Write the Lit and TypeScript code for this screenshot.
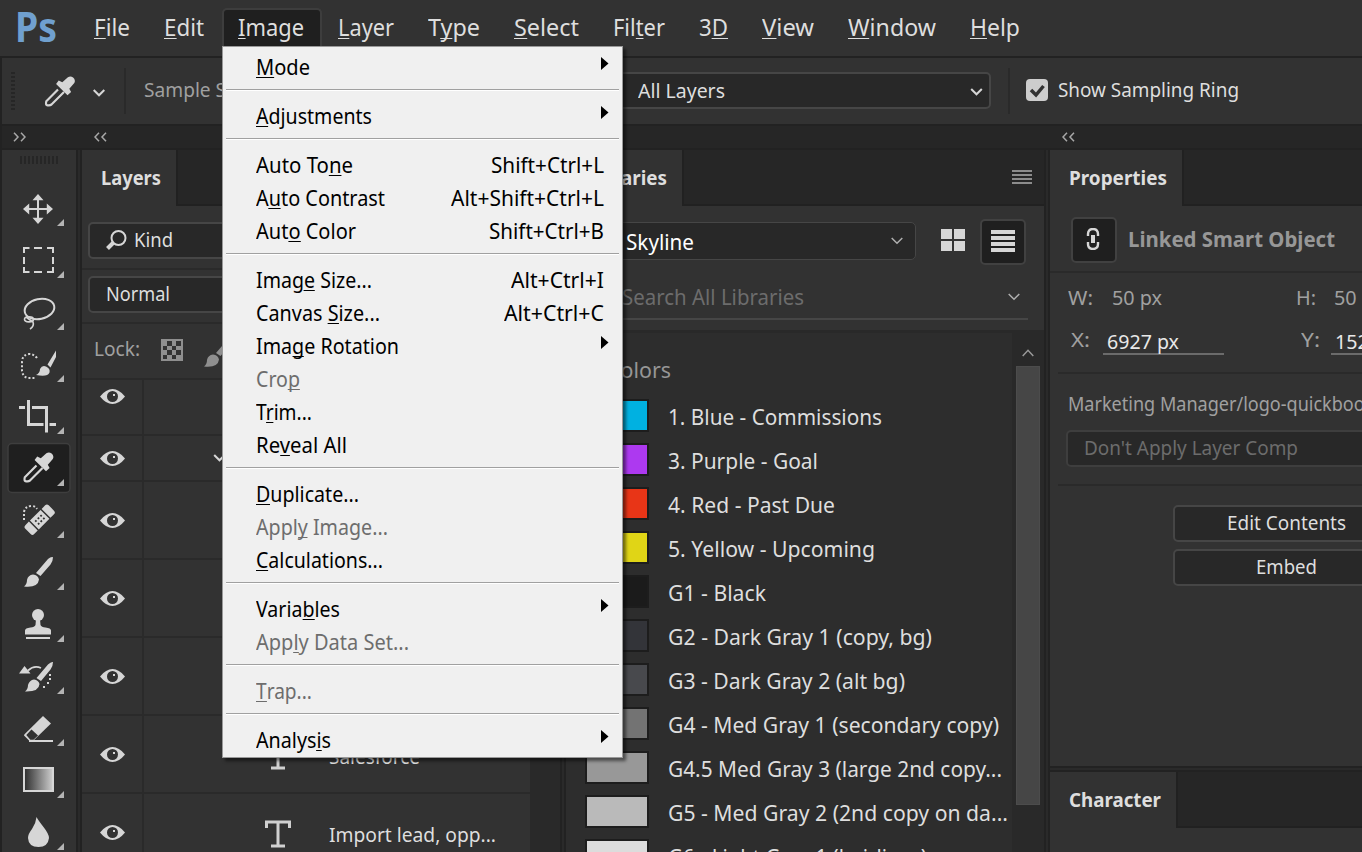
import { LitElement, html, svg, css, nothing } from "lit";
import { customElement, property } from "lit/decorators.js";

/* Single line of text condensed or widened horizontally to a given width. */
@customElement("ui-label")
class UiLabel extends LitElement {
  @property({ type: Number }) w = 0;
  @property() text = "";
  static styles = css`
    :host { display: inline-block; white-space: pre; flex: none; line-height: 30px; height: 30px; }
    .t { display: inline-block; transform-origin: 0 50%; }
    .u { position: relative; }
    .u::after { content: ""; position: absolute; left: 0; right: 0; bottom: var(--u, 3px); height: 1px; background: currentColor; }
  `;
  render() {
    const parts = this.text.split("&");
    if (parts.length === 1) return html`<span class="t">${this.text}</span>`;
    return html`<span class="t">${parts[0]}<span class="u">${parts[1][0]}</span>${parts[1].slice(1)}</span>`;
  }
  updated() {
    const el = this.renderRoot.querySelector(".t") as HTMLElement;
    const natural = el.getBoundingClientRect().width;
    if (!this.w || !natural) return;
    el.style.transform = `scaleX(${this.w / natural})`;
    this.style.width = `${this.w}px`;
  }
}

const MENUS: [string, number][] = [
  ["&File", 36], ["&Edit", 40], ["&Image", 66], ["&Layer", 56], ["T&ype", 52], ["&Select", 65],
  ["Fil&ter", 52], ["3&D", 29], ["&View", 52], ["&Window", 88], ["&Help", 50],
];

type Item = { t: string; w: number; key?: string; kw?: number; sub?: boolean; off?: boolean } | null;
const ITEMS: Item[] = [
  { t: "&Mode", w: 54, sub: true }, null,
  { t: "&Adjustments", w: 116, sub: true }, null,
  { t: "Auto To&ne", w: 97, key: "Shift+Ctrl+L", kw: 113 },
  { t: "A&uto Contrast", w: 129, key: "Alt+Shift+Ctrl+L", kw: 153 },
  { t: "Aut&o Color", w: 100, key: "Shift+Ctrl+B", kw: 115 }, null,
  { t: "Imag&e Size...", w: 116, key: "Alt+Ctrl+I", kw: 93 },
  { t: "Canvas &Size...", w: 124, key: "Alt+Ctrl+C", kw: 100 },
  { t: "Ima&ge Rotation", w: 143, sub: true },
  { t: "Cro&p", w: 44, off: true },
  { t: "T&rim...", w: 56 },
  { t: "Re&veal All", w: 91 }, null,
  { t: "&Duplicate...", w: 103 },
  { t: "Appl&y Image...", w: 132, off: true },
  { t: "&Calculations...", w: 127 }, null,
  { t: "Varia&bles", w: 84, sub: true },
  { t: "App&ly Data Set...", w: 153, off: true }, null,
  { t: "&Trap...", w: 56, off: true }, null,
  { t: "Analys&is", w: 75, sub: true },
];

const SWATCHES: [string, string, number][] = [
  ["#00b1e1", "1. Blue - Commissions", 214],
  ["#ad39f0", "3. Purple - Goal", 150],
  ["#e83517", "4. Red - Past Due", 167],
  ["#e0d516", "5. Yellow - Upcoming", 207],
  ["#1b1b1b", "G1 - Black", 98],
  ["#333439", "G2 - Dark Gray 1 (copy, bg)", 264],
  ["#48494d", "G3 - Dark Gray 2 (alt bg)", 237],
  ["#737373", "G4 - Med Gray 1 (secondary copy)", 331],
  ["#989898", "G4.5 Med Gray 3 (large 2nd copy...", 334],
  ["#bababa", "G5 - Med Gray 2 (2nd copy on da...", 340],
  ["#dcdcdc", "G6 - Light Gray 1 (hairlines)", 259],
];

const dropper = svg`
  <path d="M36.5 465.5L24.8 477.2Q23.6 481.8 26.6 481.3Q28.5 481.6 30 480.5L42.5 468" fill="none" stroke="#d6d6d6" stroke-width="2.2"/>
  <path d="M37.2 456.6L40.8 458.2L46.4 453.2Q49 451.6 51.6 453.4Q54.4 456 52.8 459L47.8 464.8L49.6 468L46 471.2L34.6 460Z" fill="#d6d6d6"/>`;

const TOOLS = [
  svg`<path d="M38 199v20M28 209h20" stroke="#d6d6d6" stroke-width="2"/><path d="M38 194l5.5 6.2h-11zM38 224l5.5-6.2h-11zM23 209l6.2-5.5v11zM53 209l-6.2-5.5v11z" fill="#d6d6d6"/>`,
  svg`<path d="M24 253v-5h5.500M34 248h8M47 248h6v5M53 257v7M53 267v5h-6M42 272h-8M29.500 272h-5.500v-5M24 264v-7" fill="none" stroke="#d6d6d6" stroke-width="2"/>`,
  svg`<ellipse cx="39.500" cy="309" rx="15" ry="10" transform="rotate(-12 39.500 309)" fill="none" stroke="#d6d6d6" stroke-width="2"/><ellipse cx="29" cy="319.300" rx="4.500" ry="2.600" fill="none" stroke="#d6d6d6" stroke-width="1.600"/><path d="M26 317q4 3 7 5q1.500 4-3 7" fill="none" stroke="#d6d6d6" stroke-width="1.600"/>`,
  svg`<path d="M37 358q-3-4-8-4q-7 1-7 8v9q1 6 6 7h8" fill="none" stroke="#d6d6d6" stroke-width="2" stroke-dasharray="2 2"/><path d="M36 375q4-2 4-6q2-4 6-2.500q4.500 2 3.500 6q-2 5-13.500 2.500M47.500 364.500L56 350.500V357L50.500 367.500z" fill="#d6d6d6"/>`,
  svg`<path d="M19 407.500h6M32 407.500h14.500v17M28.500 400v24.500h15M49.500 424.500h6.500M46.500 424v8.500" fill="none" stroke="#d6d6d6" stroke-width="3"/>`,
  svg`<rect x="8" y="443.500" width="62" height="49" rx="4" fill="#1f1f1f" stroke="#3e3e3e" stroke-width="1.500"/>${dropper}`,
  svg`<path d="M24 520v-8q1-6 8-6q3 0 5 3" fill="none" stroke="#d6d6d6" stroke-width="2" stroke-dasharray="2 2"/><g transform="rotate(-45 39.500 519.500)"><path d="M25.500 513.500h5v12.500h-5q-2.500 0-2.500-2.500v-7.500q0-2.500 2.500-2.500M53.500 513.500h-5v12.500h5q2.500 0 2.500-2.500v-7.500q0-2.500-2.500-2.500M32 513.500h15v12.500h-15z" fill="#d6d6d6"/><path d="M35 517h1.800v1.800h-1.800zM38.700 517h1.800v1.800h-1.800zM42.400 517h1.800v1.800h-1.800zM35 521h1.800v1.800h-1.800zM38.700 521h1.800v1.800h-1.800zM42.400 521h1.800v1.800h-1.800z" fill="#323232"/></g>`,
  svg`<path d="M24 586.500Q27 584 27 580Q28 575 33 574.500Q38 575 39 579.500Q38 588 24 586.500M36 573L48 559Q51 556.500 53 557.200Q53 561 50.500 564.500L40.500 576z" fill="#d6d6d6"/>`,
  svg`<circle cx="38" cy="615" r="6" fill="#d6d6d6"/><path d="M36 619h4l.5 6q1 2 5 2.500q5.500.5 5.500 3v4H25v-4q0-2.500 5.500-3q4-.5 5-2.500zM26 637h24v2H26z" fill="#d6d6d6"/>`,
  svg`<path d="M25 691.500Q28 689 28 685Q29.500 680 34 679.500Q38.500 680 39.500 684Q39 692 25 691.500M36.500 678L48 664.500Q51 661.500 53 662Q53 666 50.500 669.500L41 681zM19 673.500L24.500 666L30.500 673.500z" fill="#d6d6d6"/><path d="M28 670.500Q34 665 41 668" fill="none" stroke="#d6d6d6" stroke-width="1.800"/><path d="M49 674h2v2h-2zM49 678h2v2h-2zM47 682h2v2h-2zM43 686h2v2h-2z" fill="#d6d6d6"/>`,
  svg`<path d="M24.300 734.500L43 716L51 723.500L33 741H29.500L24 735.500z" fill="#d6d6d6"/><path d="M26.300 735L31.500 729.500L38 735.500L33.500 739.800H30.300z" fill="#323232"/><path d="M29 741h24" stroke="#d6d6d6" stroke-width="2"/>`,
  svg`<defs><linearGradient id="g"><stop offset="0" stop-color="#2c2c2c"/><stop offset="1" stop-color="#cfcfcf"/></linearGradient></defs><rect x="24" y="768" width="29" height="23" fill="url(#g)" stroke="#d6d6d6" stroke-width="2"/>`,
  svg`<path d="M36.500 817Q38 820 43.500 827Q49 834 49 838Q48 847 38.500 847Q28.500 847 28 838Q28 834 32 829Q36 823 36.500 817" fill="#d6d6d6"/>`,
];

const eye = html`<svg class="eye" viewBox="0 0 25 15"><path d="M0 7.500Q6 0 12.500 0T25 7.500Q19 15 12.500 15T0 7.500" fill="#d6d6d6"/><circle cx="12.500" cy="7.500" r="5.500" fill="#323232"/><rect x="13" y="5" width="2" height="2" fill="#d6d6d6"/></svg>`;
const chev = (w: number, c = "#d6d6d6", s = 2) => html`<svg width=${w} height="8" viewBox="0 0 12 8" class="ch"><path d="M.7 1L6 6.300L11.300 1" fill="none" stroke=${c} stroke-width=${s}/></svg>`;
const dbl = (flip: boolean) => html`<svg class="dbl" viewBox="0 0 13 10"><path d=${flip ? "M5 .8L1 5L5 9.200M12 .8L8 5L12 9.200" : "M1 .8L5 5L1 9.200M8 .8L12 5L8 9.200"} fill="none" stroke="#a8a8a8" stroke-width="1.500"/></svg>`;
const ROWS = [54, 44, 76, 76, 76, 76, 76];
const LAYERS: Record<number, [string, number]> = { 5: ["Salesforce", 91], 6: ["Import lead, opp...", 167] };

@customElement("app-root")
class AppRoot extends LitElement {
  static styles = css`
    :host { display: block; position: relative; width: 1362px; height: 852px; overflow: hidden; background: #222; color: #dedede; font: 20.500px/30px "Noto Sans", "Open Sans", sans-serif; }
    * { box-sizing: border-box; }
    svg { display: block; flex: none; }
    .row { display: flex; align-items: center; }
    .bar { height: 56px; background: #323232; padding-left: 15px; font-size: 23px; }
    .logo { font-size: 41px; font-weight: 700; color: #70a0cf; width: 79px; margin-top: -5px; }
    .menus { display: flex; gap: 34px; align-self: stretch; --u: 4px; }
    .m { height: 38px; margin: 8px 0 0; padding-top: 4px; }
    .m.on { margin: 8px -18px 0 -16px; padding: 2px 16px 0 14px; border: 2px solid #3d3d3d; border-bottom: 0; border-radius: 5px 5px 0 0; background: #1f1f1f; }
    .opts { height: 66px; margin: 2px 0 2px 2px; background: #323232; }
    .opts .ch { margin-top: 4px; }
    .vgrip { width: 4px; height: 38px; margin: 0 29px 0 9px; background: repeating-linear-gradient(#262626 0 2px, transparent 2px 4px); }
    .sep { width: 2px; height: 46px; background: #2a2a2a; }
    .dim { color: #a0a0a0; }
    .box { display: flex; align-items: center; border: 2px solid #464646; border-radius: 5px; background: #282828; height: 37px; }
    .all { width: 400px; margin: 0 0 1px auto; padding: 0 6px 1px 0; justify-content: space-between; }
    .head { height: 22px; margin-left: 2px; background: #262626; }
    .dbl { width: 13px; height: 10px; }
    .dock { display: grid; grid-template-columns: 74px 478px 478px 312px; gap: 6px; height: 702px; margin: 2px 0 0 2px; background: linear-gradient(90deg, transparent 76px, #2a2a2a 76px 78px, transparent 78px 560px, #2a2a2a 560px 562px, transparent 562px 1044px, #2a2a2a 1044px 1046px, transparent 1046px); }
    .tools { background: #323232; padding-top: 6px; }
    .hgrip { width: 38px; height: 8px; margin: 0 0 18px 18px; background: repeating-linear-gradient(90deg, #262626 0 2px, transparent 2px 4px); }
    .panel { background: #323232; min-width: 0; overflow: hidden; display: flex; flex-direction: column; }
    .tabs { display: flex; height: 56px; flex: none; }
    .tab { padding: 13px 15px 0 19px; font-weight: 700; font-size: 20px; }
    .fill { flex: 1; background: #262626; border-left: 2px solid #212121; border-bottom: 2px solid #212121; display: flex; justify-content: flex-end; padding: 20px 12px 0 0; }
    .ham { width: 20px; height: 14px; background: repeating-linear-gradient(#8c8c8c 0 2px, transparent 2px 4px); }
    .hr { height: 2px; background: #2a2a2a; flex: none; }
    .box.lay { margin: 0 10px 0 6px; padding-left: 16px; flex: none; }
    .lrow { display: grid; grid-template-columns: 60px 386px; column-gap: 2px; border-bottom: 2px solid #2a2a2a; background: linear-gradient(90deg, transparent 60px, #2a2a2a 60px 62px, transparent 62px); width: 448px; box-sizing: content-box; overflow: hidden; align-items: center; }
    .rows { flex: 1; background: #292929; overflow: hidden; }
    .lrow { background-color: #323232; }
    .eye { width: 25px; height: 15px; margin-left: 18px; }
    .lock { height: 54px; padding-left: 12px; }
    .list { flex: 1; display: flex; border-top: 3px solid #292929; background: #2d2d2d; overflow: hidden; }
    .items { flex: 1; padding: 21px 0 0 19px; overflow: hidden; font-size: 22px; min-width: 0; }
    .sw { display: flex; align-items: center; height: 44px; }
    .chip { width: 64px; height: 33px; border: 2px solid #1d1d1d; margin-right: 19px; margin-top: -1px; flex: none; }
    .sb { width: 32px; background: #292929; padding: 16px 4px 0; }
    .thumb { height: 439px; margin-top: 9px; background: #464646; border: 1px solid #4c4c4c; }
    .btn { width: 46px; height: 46px; border: 2px solid #414141; border-radius: 5px; background: #1f1f1f; display: flex; align-items: center; justify-content: center; flex: none; }
    .right { display: grid; grid-template-rows: 616px 2px 80px; gap: 2px; min-width: 0; }
    .gap { background: #2a2a2a; }
    .inp { border-bottom: 2px solid #6b6b6b; height: 29px; padding-left: 4px; width: 121px; color: #e8e8e8; flex: none; }
    .inp ui-label { margin-top: -1px; }
    .push { width: 228px; height: 37px; justify-content: center; margin-left: 123px; flex: none; padding: 0 2px 4px 0; }
    .menu { position: absolute; left: 222px; top: 46px; width: 401px; height: 712px; background: #f0f0f0; border: 1px solid #999; padding: 2px 3px 0 3px; color: #000; box-shadow: 3px 3px 3px rgba(0,0,0,.5); font-size: 21px; }
    .mi { display: flex; height: 33px; padding: 3px 15px 0 30px; justify-content: space-between; }
    .mi.off { color: #6d6d6d; }
    .ms { height: 16px; padding-top: 7px; }
    .ms div { height: 2px; background: #a0a0a0; border-bottom: 1px solid #fff; }
    .ar { margin: 5px -5px 0 0; }
  `;

  private tabs(t: string, w: number, ham = false) {
    return html`<div class="tabs"><div class="tab"><ui-label text=${t} w=${w}></ui-label></div><div class="fill">${ham ? html`<div class="ham"></div>` : nothing}</div></div>`;
  }

  render() {
    return html`
      <div class="bar row">
        <div class="logo"><ui-label text="Ps" w="42"></ui-label></div>
        <div class="menus">${MENUS.map(([t, w], i) => html`<div class="m ${i === 2 ? "on" : ""}"><ui-label text=${t} w=${w}></ui-label></div>`)}</div>
      </div>
      <div class="opts row">
        <div class="vgrip"></div>
        <svg width="32" height="32" viewBox="23 451 31 32">${dropper}</svg>
        <div style="width:17px"></div>${chev(12)}<div style="width:19px"></div>
        <div class="sep"></div>
        <ui-label class="dim" style="margin:0 0 4px 18px" text="Sample Size:" w="112"></ui-label>
        <div class="box all"><ui-label style="margin:0 0 1px 45px" text="All Layers" w="87"></ui-label>${chev(13)}</div>
        <div class="sep" style="margin:0 16px 0 17px"></div>
        <svg style="margin-bottom:3px" width="22" height="22" viewBox="0 0 22 22"><rect width="22" height="22" rx="4" fill="#cdcdcd"/><path d="M5 11l5 5L17.500 7" fill="none" stroke="#323232" stroke-width="3.500"/></svg>
        <ui-label style="margin:0 123px 4px 10px" text="Show Sampling Ring" w="181"></ui-label>
      </div>
      <div class="head row">
        <div style="width:11px"></div>${dbl(false)}<div style="width:68px"></div>${dbl(true)}<div style="width:955px"></div>${dbl(true)}
      </div>
      <div class="dock">
        <div class="tools">
          <div class="hgrip"></div>
          ${TOOLS.map((t, i) => html`<svg width="74" height="52" viewBox="2 ${182 + 52 * i} 74 52">${t}<path d="M64 ${219 + 52 * i}v7h-7z" fill="#b4b4b4"/></svg>`)}
        </div>
        <div class="panel">
          ${this.tabs("Layers", 60)}
          <div class="box lay" style="margin-top:16px"><svg width="21" height="21" viewBox="0 0 21 21"><circle cx="12.500" cy="8" r="7" fill="none" stroke="#d6d6d6" stroke-width="2"/><path d="M7.500 12.500L1.500 18.500" stroke="#d6d6d6" stroke-width="4"/></svg><ui-label style="margin:0 0 3px 7px" text="Kind" w="39"></ui-label></div>
          <div class="hr" style="margin-top:9px"></div>
          <div class="box lay" style="margin-top:6px"><ui-label style="margin-bottom:3px" text="Normal" w="64"></ui-label></div>
          <div class="hr" style="margin-top:9px"></div>
          <div class="lock row">
            <ui-label class="dim" text="Lock:" w="46" style="margin-bottom:7px"></ui-label>
            <svg style="margin:0 0 2px 21px" width="22" height="22" viewBox="0 0 22 22"><rect width="22" height="22" fill="#8f8f8f"/><path d="M6 2h5v5h-5zM15 2h5v5h-5zM2 7h4v4h-4zM11 7h4v4h-4zM6 11h5v5h-5zM15 11h5v5h-5zM2 16h4v4h-4zM11 16h4v4h-4z" fill="#323232"/></svg>
            <svg style="margin:2px 0 0 21px" width="30" height="30" viewBox="24 557 30 30"><path d="M24 586.500Q27 584 27 580Q28 575 33 574.500Q38 575 39 579.500Q38 588 24 586.500M36 573L48 559Q51 556.500 53 557.200Q53 561 50.500 564.500L40.500 576z" fill="#8f8f8f"/></svg>
          </div>
          <div class="hr"></div>
          <div class="rows">${ROWS.map((h, i) => html`<div class="lrow" style="height:${h}px"><div style="padding-top:${i === 0 ? 0 : 1}px;margin-top:${i === 0 ? -21 : 0}px">${eye}</div>
            ${LAYERS[i] ? html`<div class="row" style="padding:3px 0 0 121px"><svg width="26" height="28" viewBox="0 0 26 28"><path d="M1.500 8V2h23v6M13 2v24M6 26h14" fill="none" stroke="#d0d0d0" stroke-width="3"/></svg><ui-label style="margin:0 0 0 38px" text=${LAYERS[i][0]} w=${LAYERS[i][1]}></ui-label></div>`
            : i === 1 ? html`<div style="padding-left:69px">${chev(13)}</div>` : html`<div></div>`}</div>`)}</div>
        </div>
        <div class="panel">
          ${this.tabs("Libraries", 82, true)}
          <div class="row" style="height:60px;padding:12px 18px 0 20px;flex:none">
            <div class="box" style="width:330px;height:38px;border-width:1.500px;justify-content:space-between;padding:0 12px 0 39px;margin-bottom:2px"><ui-label text="Skyline" w="68" style="color:#fff;font-size:22px;margin-top:0"></ui-label>${chev(12, "#b0b0b0", 1.5)}</div>
            <svg style="margin:-4px 15px 0 25px" width="24" height="22" viewBox="0 0 24 22"><path d="M0 0h11v10H0zM13 0h11v10H13zM0 12h11v10H0zM13 12h11v10H13z" fill="#d6d6d6"/></svg>
            <div class="btn"><svg style="margin-bottom:3px" width="24" height="22" viewBox="0 0 24 22"><path d="M0 0h24v4H0zM0 6h24v4H0zM0 12h24v4H0zM0 18h24v4H0z" fill="#d6d6d6"/></svg></div>
          </div>
          <div style="padding:0 16px 0 20px;height:54px;flex:none"><div class="row" style="height:54px;border-bottom:2px solid #464646;justify-content:space-between;padding:10px 8px 0 36px"><ui-label text="Search All Libraries" w="182" style="color:#6c6c6c;font-size:22px;margin-bottom:2px"></ui-label>${chev(12, "#b0b0b0", 1.5)}</div></div>
          <div class="list" style="margin-top:10px">
            <div class="items">
              <ui-label style="margin:0 0 10px 22px;color:#969696;vertical-align:top" text="Colors" w="64"></ui-label>
              ${SWATCHES.map(([c, t, w]) => html`<div class="sw"><div class="chip" style="background:${c}"></div><ui-label text=${t} w=${w}></ui-label></div>`)}
            </div>
            <div class="sb"><svg style="margin-left:6px" width="12" height="8" viewBox="0 0 12 8"><path d="M.7 7L6 1.300L11.300 7" fill="none" stroke="#999" stroke-width="1.500"/></svg><div class="thumb"></div></div>
          </div>
        </div>
        <div class="right">
          <div class="panel">
            ${this.tabs("Properties", 98)}
            <div class="row" style="padding:0 0 0 21px;margin-top:11px;flex:none;font-weight:700;color:#979797"><div class="btn"><svg style="margin:0 2px 2px 0" width="14" height="22" viewBox="0 0 14 22"><path d="M2 8V6q0-5 5-5t5 5v2M2 14v2q0 5 5 5t5-5v-2" fill="none" stroke="#d6d6d6" stroke-width="2.400"/><path d="M7 7v8" stroke="#d6d6d6" stroke-width="4"/></svg></div><ui-label style="margin:0 0 2px 11px" text="Linked Smart Object" w="207"></ui-label></div>
            <div class="hr" style="margin-top:8px"></div>
            <div class="row dim" style="margin-top:9px;padding-left:18px;flex:none"><ui-label text="W:" w="25"></ui-label><ui-label style="margin-left:19px" text="50 px" w="50"></ui-label><ui-label style="margin-left:134px" text="H:" w="20"></ui-label><ui-label style="margin-left:18px" text="50 px" w="50"></ui-label></div>
            <div class="row dim" style="margin-top:12px;height:31px;padding-left:21px;flex:none"><ui-label text="X:" w="19" style="margin-bottom:1px"></ui-label><div class="inp" style="margin:1px 0 0 13px"><ui-label text="6927 px" w="72"></ui-label></div><ui-label style="margin:0 0 1px 77px" text="Y:" w="19"></ui-label><div class="inp" style="margin:1px 0 0 11px"><ui-label text="1524 px" w="72"></ui-label></div></div>
            <div class="hr" style="margin:17px 0 0 8px"></div>
            <ui-label class="dim" style="margin:14px 0 0 18px" text="Marketing Manager/logo-quickbooks" w="315"></ui-label>
            <div class="box" style="margin:12px -10px 0 16px;padding:0 0 3px 16px;flex:none;border-color:#3e3e3e;color:#6c6c6c"><ui-label text="Don't Apply Layer Comp" w="214"></ui-label></div>
            <div class="hr" style="margin:17px 0 0 8px"></div>
            <div class="box push" style="margin-top:19px"><ui-label text="Edit Contents" w="119"></ui-label></div>
            <div class="box push" style="margin-top:7px"><ui-label text="Embed" w="61"></ui-label></div>
          </div>
          <div class="gap"></div>
          <div class="panel">${this.tabs("Character", 92)}</div>
        </div>
      </div>
      <div class="menu">${ITEMS.map((m) => m === null ? html`<div class="ms"><div></div></div>` : html`<div class="mi ${m.off ? "off" : ""}"><ui-label text=${m.t} w=${m.w}></ui-label>${m.key ? html`<ui-label text=${m.key} w=${m.kw ?? 0}></ui-label>` : m.sub ? html`<svg class="ar" width="8" height="13" viewBox="0 0 8 13"><path d="M0 0L7.500 6.500L0 13z"/></svg>` : nothing}</div>`)}</div>
    `;
  }
}
